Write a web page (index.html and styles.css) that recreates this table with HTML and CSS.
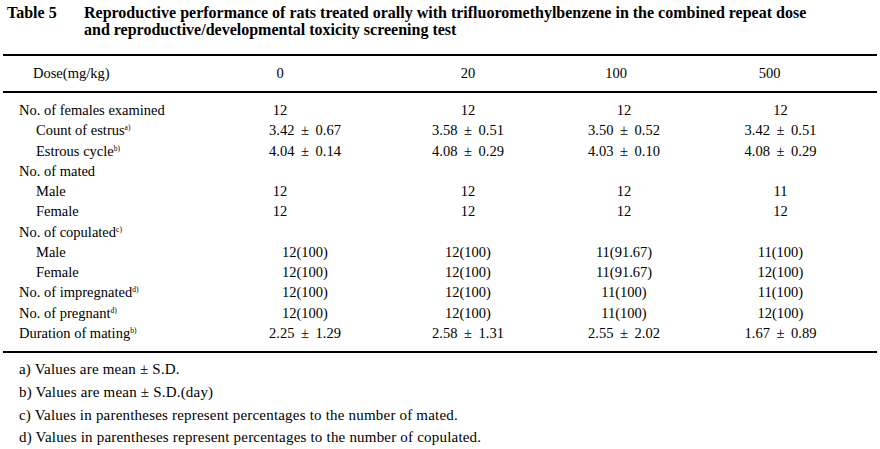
FILE: index.html
```html
<!DOCTYPE html>
<html>
<head>
<meta charset="utf-8">
<link rel="stylesheet" href="styles.css">
</head>
<body>
<div class="page">
  <div class="caption">
    <div class="cap-label">Table 5</div>
    <div class="cap-text">Reproductive performance of rats treated orally with trifluoromethylbenzene in the combined repeat dose<br>and reproductive/developmental toxicity screening test</div>
  </div>
  <table class="data">
    <colgroup>
      <col class="c-label"><col class="c1"><col class="c2"><col class="c3"><col class="c4">
    </colgroup>
    <thead>
      <tr>
        <th class="lbl head-lbl">Dose(mg/kg)</th>
        <th class="shift1">0</th>
        <th>20</th>
        <th class="shift2">100</th>
        <th class="shift2">500</th>
      </tr>
    </thead>
    <tbody>
      <tr class="first">
        <td class="lbl">No. of females examined</td>
        <td class="shift1">12</td><td>12</td><td>12</td><td>12</td>
      </tr>
      <tr class="msd">
        <td class="lbl sub">Count of estrus<sup>a)</sup></td>
        <td>3.42 &#177; 0.67</td><td>3.58 &#177; 0.51</td><td>3.50 &#177; 0.52</td><td>3.42 &#177; 0.51</td>
      </tr>
      <tr class="msd">
        <td class="lbl sub">Estrous cycle<sup>b)</sup></td>
        <td>4.04 &#177; 0.14</td><td>4.08 &#177; 0.29</td><td>4.03 &#177; 0.10</td><td>4.08 &#177; 0.29</td>
      </tr>
      <tr>
        <td class="lbl">No. of mated</td>
        <td></td><td></td><td></td><td></td>
      </tr>
      <tr>
        <td class="lbl sub">Male</td>
        <td class="shift1">12</td><td>12</td><td>12</td><td>11</td>
      </tr>
      <tr>
        <td class="lbl sub">Female</td>
        <td class="shift1">12</td><td>12</td><td>12</td><td>12</td>
      </tr>
      <tr>
        <td class="lbl">No. of copulated<sup>c)</sup></td>
        <td></td><td></td><td></td><td></td>
      </tr>
      <tr>
        <td class="lbl sub">Male</td>
        <td>12(100)</td><td>12(100)</td><td>11(91.67)</td><td>11(100)</td>
      </tr>
      <tr>
        <td class="lbl sub">Female</td>
        <td>12(100)</td><td>12(100)</td><td>11(91.67)</td><td>12(100)</td>
      </tr>
      <tr>
        <td class="lbl">No. of impregnated<sup>d)</sup></td>
        <td>12(100)</td><td>12(100)</td><td>11(100)</td><td>11(100)</td>
      </tr>
      <tr>
        <td class="lbl">No. of pregnant<sup>d)</sup></td>
        <td>12(100)</td><td>12(100)</td><td>11(100)</td><td>12(100)</td>
      </tr>
      <tr class="last msd">
        <td class="lbl">Duration of mating<sup>b)</sup></td>
        <td>2.25 &#177; 1.29</td><td>2.58 &#177; 1.31</td><td>2.55 &#177; 2.02</td><td>1.67 &#177; 0.89</td>
      </tr>
    </tbody>
  </table>
  <ul class="notes">
    <li>a) Values are mean &#177; S.D.</li>
    <li>b) Values are mean &#177; S.D.(day)</li>
    <li>c) Values in parentheses represent percentages to the number of mated.</li>
    <li>d) Values in parentheses represent percentages to the number of copulated.</li>
  </ul>
</div>
</body>
</html>
```

FILE: styles.css
```css
html, body {
  margin: 0;
  padding: 0;
  background: #ffffff;
}

body {
  font-family: "Liberation Serif", "Times New Roman", serif;
  color: #000000;
}

.page {
  width: 880px;
  height: 449px;
  padding: 3px 3px 0 3px;
  box-sizing: border-box;
}

.caption {
  display: flex;
  font-weight: bold;
  font-size: 16px;
  line-height: 17px;
  padding-top: 1px;
}

.cap-label {
  width: 81px;
  padding-left: 4px;
  box-sizing: border-box;
  flex: none;
}

.cap-text {
  flex: 1;
  white-space: nowrap;
}

.data {
  margin-top: 16px;
  width: 874px;
  border-collapse: collapse;
  table-layout: fixed;
  font-size: 14.5px;
  border-top: 2px solid #000;
  border-bottom: 2px solid #000;
}

.c-label { width: 227px; }
.c1 { width: 150px; }
.c2 { width: 176px; }
.c3 { width: 136px; }
.c4 { width: 185px; }

.data th,
.data td {
  font-weight: normal;
  text-align: center;
  padding: 0;
  white-space: nowrap;
}

.data thead th {
  height: 35px;
  border-bottom: 2px solid #000;
}

.data tbody td {
  height: 20.27px;
  line-height: 20.27px;
}

.data tbody tr.first td {
  padding-top: 7px;
}

.data tbody tr.last td {
  padding-bottom: 8px;
}

.data tr.msd td {
  word-spacing: 3px;
}

.data tr.msd td.lbl {
  word-spacing: 0;
}

.data .lbl {
  text-align: left;
  padding-left: 16px;
}

.data .head-lbl {
  padding-left: 30px;
}

.data .sub {
  padding-left: 33px;
}

.data .shift1 {
  padding-right: 50px;
}

.data .shift2 {
  padding-right: 16px;
}

.data td:last-child,
.data th:last-child {
  padding-right: 8px;
}

.data td.shift1:last-child {
  padding-right: 8px;
}

.data th.shift2:last-child {
  padding-right: 30px;
}

sup {
  font-size: 7.5px;
  line-height: 0;
  vertical-align: 5px;
}

.notes {
  list-style: none;
  margin: 5px 0 0 0;
  padding: 0 0 0 16px;
  font-size: 15px;
  letter-spacing: 0.2px;
  line-height: 22.7px;
}
```
